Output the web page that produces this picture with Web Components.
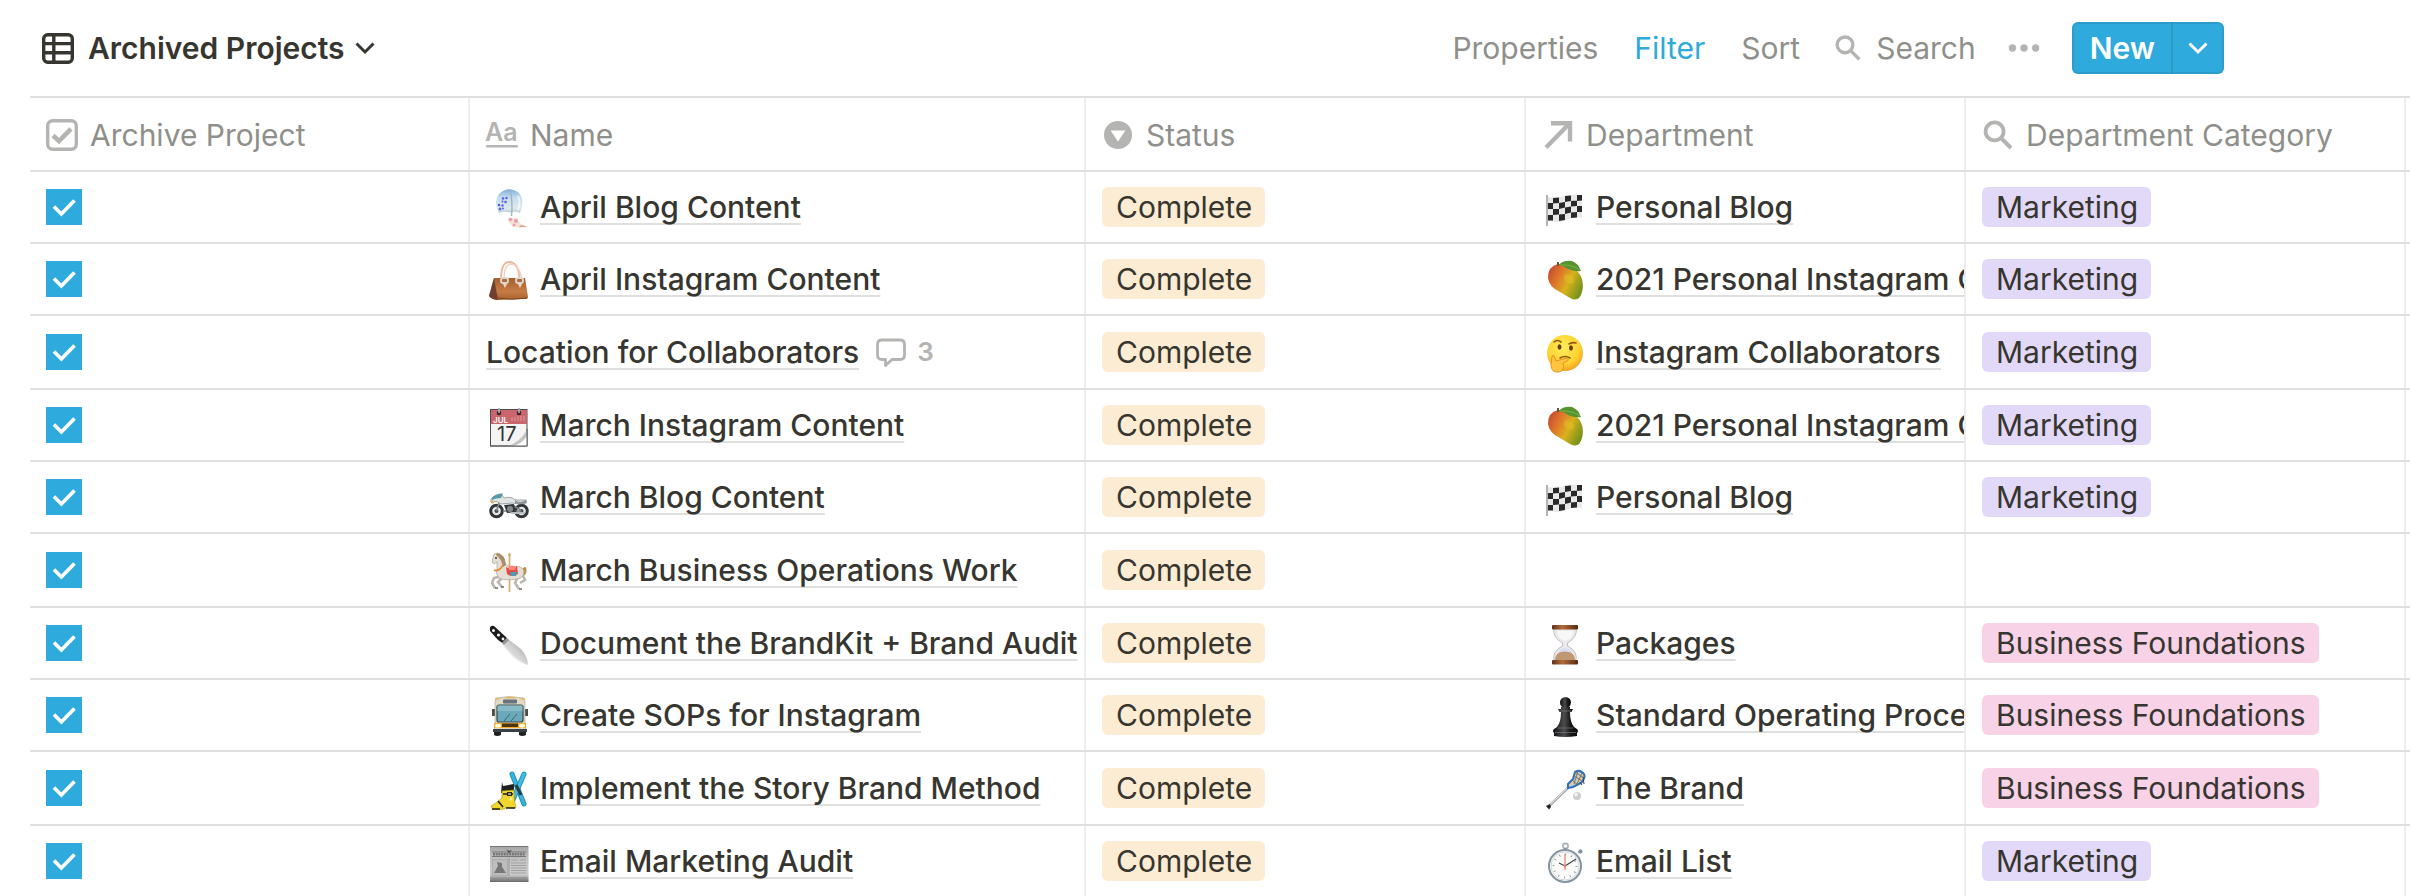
<!DOCTYPE html>
<html lang="en">
<head>
<meta charset="utf-8">
<title>Archived Projects</title>
<style>
  body {
    margin: 0;
    background: #ffffff;
    color: #37352f;
    font-family: Inter, "Liberation Sans", sans-serif;
    font-size: 30px;
    line-height: 40px;
    overflow: hidden;
  }
</style>
</head>
<body>
<project-database></project-database>

<script>
/**
 * Interface icons, drawn in a 32 x 32 box
 */
const ICONS = {
  table: `<g fill="none" stroke="currentColor" stroke-width="3.4">
    <rect x="1.7" y="2.7" width="28.6" height="27.6" rx="4"/>
    <path d="M2 11.6H30M2 20.8H30M11.8 3V30"/></g>`,
  down: `<path d="M7.5 11.5L16 20L24.5 11.5" fill="none" stroke="currentColor" stroke-width="3"/>`,
  checkbox: `<rect x="1.7" y="1.7" width="28.6" height="28.6" rx="5" fill="none" stroke="currentColor" stroke-width="3.4"/>
    <path d="M7 16.5L13 22L25 9.8" fill="none" stroke="currentColor" stroke-width="4.6"/>`,
  title: `<text x="-1" y="22" font-size="25" font-weight="600" fill="currentColor">Aa</text>
    <rect y="26" width="32" height="2.6" rx="1.3" fill="currentColor"/>`,
  select: `<circle cx="16" cy="16" r="14" fill="currentColor"/><path d="M8.6 11.5H23.4L16 22.5Z" fill="#fff"/>`,
  relation: `<path d="M4 28.5L27 5" fill="none" stroke="currentColor" stroke-width="4.4"/>
    <path d="M9 4.2H28V22.5" fill="none" stroke="currentColor" stroke-width="4.4"/>`,
  search: `<circle cx="12.6" cy="12.4" r="9" fill="none" stroke="currentColor" stroke-width="3.8"/>
    <path d="M19 19L29 29" stroke="currentColor" stroke-width="4"/>`,
  dots: `<g fill="currentColor"><circle cx="4.4" cy="16" r="3.7"/><circle cx="16" cy="16" r="3.7"/><circle cx="27.6" cy="16" r="3.7"/></g>`,
  comment: `<path d="M7 4H25Q29.500 4 29.500 8.500V19Q29.500 23.500 25 23.500H17L10.500 29.500V23.500H7Q2.500 23.500 2.500 19V8.500Q2.500 4 7 4Z"
    fill="none" stroke="currentColor" stroke-width="2.8" stroke-linejoin="round"/>`,
  tick: `<path d="M4.500 15.500L13 24L28 8.500" fill="none" stroke="currentColor" stroke-width="4.200"/>`
};

/**
 * Page pictures, drawn in a 40 x 40 box
 */
const PICTURES = {
  chime: `
    <defs><linearGradient id="g" x1="0" y1="0" x2="0" y2="1"><stop offset="0" stop-color="#7db0de"/><stop offset=".35" stop-color="#c3dcee"/><stop offset=".8" stop-color="#dfe9ee"/><stop offset="1" stop-color="#b7cbd8"/></linearGradient></defs>
    <path d="M11 24Q5 13 11 5Q20-4 31 4Q37 12 32 24Q28 22 21.500 23.500Q15 22 11 24Z" fill="url(#g)"/>
    <path d="M22 1Q25 12 23.500 27" fill="none" stroke="#9fb4c2" stroke-width="1.400"/>
    <path d="M30 7Q33 14 30 21" fill="none" stroke="#fff" stroke-width="2" opacity=".6"/>
    <g fill="#5960e6"><circle cx="15" cy="9.500" r="1.300"/><circle cx="18.500" cy="9" r="1.200"/><circle cx="17.500" cy="13" r="1.300"/><circle cx="14.500" cy="12.500" r="1"/>
    <circle cx="11" cy="16" r="1.300"/><circle cx="14.500" cy="16.500" r="1.200"/><circle cx="12" cy="20" r="1.400"/><circle cx="15" cy="19.500" r="1"/></g>
    <path d="M19.500 28Q25 30 29 28.500Q31 36 39.500 37.500Q29 39 25 37.500Q20 34 19.500 28Z" fill="#f1e3d0"/>
    <path d="M33 36L40 37.600L31 38.400Z" fill="#d9a58c"/>
    <g fill="#ee9bb9"><circle cx="22.500" cy="30.500" r="1.800"/><circle cx="28" cy="32" r="2"/><circle cx="26" cy="36" r="1.500"/></g>`,
  handbag: `
    <defs><linearGradient id="g" x1="0" y1="0" x2="0" y2="1"><stop offset="0" stop-color="#a35f30"/><stop offset=".6" stop-color="#c67b45"/><stop offset="1" stop-color="#a9632f"/></linearGradient></defs>
    <path d="M13 19Q13 1 21 1Q31 1 31.500 19" fill="none" stroke="#e9b99d" stroke-width="1.800"/>
    <path d="M16 17Q16 4 23 3Q30 3 34 17" fill="none" stroke="#f2d1bd" stroke-width="1.400"/>
    <path d="M6 17H37L40 36Q40 38 37 38L9 39Q3 38 1 35Z" fill="url(#g)"/>
    <path d="M6 17L10 39Q3 38 1 35Z" fill="#6f4030"/>
    <path d="M9 37Q24 39.500 39 37" fill="none" stroke="#7c4521" stroke-width="1"/>
    <g fill="#b26c3b" stroke="#ddd8d2" stroke-width="1.800"><rect x="13" y="17" width="7" height="5" rx="2"/><rect x="28" y="17" width="7" height="5" rx="2"/></g>
    <path d="M15 23H19L17 27ZM30 23H34L32 27Z" fill="#f4d5bf"/>`,
  calendar: `
    <rect x="2.500" y="2.500" width="36.500" height="36.500" fill="#f4f4f4" stroke="#4d4d50"/>
    <path d="M3 3H39V17H3Z" fill="#c9656b"/>
    <text x="5" y="15.500" font-size="8" font-weight="600" fill="#fff">JUL</text>
    <path d="M24 10V14M27 10V14M30 9V14M33 9V14M36 9V14" stroke="#dd9a9d"/>
    <circle cx="11" cy="6" r="2.300" fill="#35252a"/><circle cx="31" cy="6" r="2.300" fill="#35252a"/>
    <path d="M11 1V6M31 1V6" stroke="#a3aab6" stroke-width="1.800"/>
    <path d="M20 39Q32 35 39 23V39Z" fill="#c4c4c4"/>
    <path d="M25 39H39V29Q34 37 25 39Z" fill="#ffffff"/><path d="M2.500 39H39V22" fill="none" stroke="#5a5a5c"/>
    <text x="9" y="34" font-size="20" fill="#333">17</text>`,
  motorcycle: `
    <g fill="#e6e7e8" stroke="#333638" stroke-width="3"><circle cx="8.500" cy="32" r="5.800"/><circle cx="33.500" cy="32" r="5.800"/></g>
    <g fill="#44484b"><circle cx="8.500" cy="32" r="2"/><circle cx="33.500" cy="32" r="2"/></g>
    <path d="M8.500 32L12 21M15 32H30L33.500 32M24 26L33 31" stroke="#7d8488" stroke-width="1.600"/>
    <path d="M16 26L26 25L28 33L19 34Z" fill="#33373a"/><circle cx="22" cy="30" r="3" fill="#82888b"/><path d="M23 34H37" stroke="#b9bdc0" stroke-width="2"/>
    <path d="M3 20Q7 15 14 16L16 19Q24 17 27 21L37 21Q39 20 38.500 24Q32 26 24 24L13 25Q9 21 3 23Z" fill="#e1e5e4" stroke="#7c8486" stroke-width=".7"/>
    <path d="M4 19Q8 14 15 14.500L13 19Q8 19 4 21Z" fill="#5a9aa2"/><path d="M27 21Q31 25 38 21V24Q32 26 27 24Z" fill="#8c9396"/>
    <circle cx="4.500" cy="23" r="1.500" fill="#d9b253"/>`,
  carousel: `
    <path d="M21.500 1V40" stroke="#d7ae72" stroke-width="1.700"/><circle cx="21.500" cy="3" r="1.300" fill="#d7ae72"/>
    <path d="M34 17Q39 12 38.500 20Q38 23 35 24Q37 20 33 20Z" fill="#b99250"/>
    <path d="M11 25L6 26L4 31L7 36M14 26L10 30L14 35M30 25L27 31L31 37M34 22L37 28L32 31" fill="none" stroke="#bcb7af" stroke-width="2.600"/>
    <path d="M6 2L10 1Q16 3 17 11Q19 15 25 15Q34 13 36 19Q36 26 29 27Q17 29 11 26Q7 22 9 17L9 10L6 12L4 10Z" fill="#e4ded4" stroke="#aaa195" stroke-width=".7"/>
    <path d="M9 1Q17 2 18 13L15 15Q13 6 8 3Z" fill="#ac8d69"/><circle cx="8" cy="6" r="1" fill="#403936"/>
    <path d="M6 18Q11 20 15 13" fill="none" stroke="#df8b35" stroke-width="1.600"/>
    <path d="M18 15Q23 18 29 14L30 22Q24 26 19 22Z" fill="#e64b43"/><path d="M20 15Q24 12 28 15L27 18H21Z" fill="#ff8574"/><path d="M22 20H29L28 24H23Z" fill="#4a9cb6"/>
    <path d="M7 36H10M31 37H34M13 35H16" stroke="#6d675f" stroke-width="1.600"/>`,
  knife: `
    <defs><linearGradient id="g" x1="0" y1="1" x2="1" y2="0"><stop offset="0" stop-color="#f8f8f8"/><stop offset=".5" stop-color="#d4d4d3"/><stop offset="1" stop-color="#8f9291"/></linearGradient></defs>
    <path d="M14.500 19L20 14L33 24Q40 32 40 40Q29 37 14.500 19Z" fill="url(#g)"/><path d="M14.500 20Q28 35 40 40Q28 39 14.500 20Z" fill="#ededed"/>
    <path d="M2 6Q1 0 6 1L19 13L14.500 18L10 15Z" fill="#1c1c1d"/><path d="M19 13L21 15L16 20L14 18Z" fill="#999"/>
    <g fill="#f4f4f4"><circle cx="5.500" cy="5.500" r="1.500"/><circle cx="10.500" cy="10" r="1.600"/><circle cx="15" cy="14" r="1.400"/></g>`,
  bus: `
    <path d="M4 12H8V19H4ZM36 12H40V19H36Z" fill="#4a4d50"/>
    <path d="M6 33H13V38Q9 40 6 38ZM31 33H38V38Q34 40 31 38Z" fill="#1f2122"/>
    <path d="M8 1Q21-2 36 1L37 4V26L38 34H6L7 26V4Z" fill="#dedac5" stroke="#aaa691" stroke-width=".6"/>
    <rect x="15" y="2.500" width="14" height="4" rx="1" fill="#69727d"/><path d="M7 2H11M33 2H37M17 .700H27" stroke="#efb259" stroke-width="1.300"/>
    <rect x="9" y="8" width="26" height="17" rx="2" fill="#6aa9ba" stroke="#384648" stroke-width="1.200"/><path d="M9.500 8.500H34.500V14H9.500Z" fill="#86bac5"/>
    <path d="M16 24L22 17M23 24L29 17" stroke="#305d69" stroke-width=".9"/>
    <path d="M6 26H38V31H6Z" fill="#f4ac27"/><rect x="14" y="26.500" width="16" height="3.500" fill="#4b3415"/>
    <rect x="7" y="27" width="6" height="3.500" rx="1.500" fill="#fffbe8"/><rect x="31" y="27" width="6" height="3.500" rx="1.500" fill="#fffbe8"/><path d="M5 32H39V35H5Z" fill="#3b4044"/>`,
  ski: `
    <path d="M24 4L36 34" stroke="#2093b8" stroke-width="5" stroke-linecap="round"/><path d="M24 4L36 34" stroke="#39b5db" stroke-width="3" stroke-linecap="round"/>
    <path d="M36 4L24 32" stroke="#2093b8" stroke-width="5" stroke-linecap="round"/><path d="M36 4L24 32" stroke="#41bfe3" stroke-width="3" stroke-linecap="round"/><path d="M28 15L33 25" stroke="#273e48" stroke-width="3"/>
    <path d="M14 12L15 16L26 14V23H13Z" fill="#202022"/>
    <path d="M14 21L26 20L26.500 30L28 38H23L20 37L13 40H5L3 36Q10 32 14 28Z" fill="#f0d72e" stroke="#a4921e" stroke-width=".6"/>
    <path d="M15 24H25M10 31L15 37M18 38H27M4 39H12" stroke="#211f17" stroke-width="1.600"/><path d="M19 22H24V26H19Z" fill="#28251b"/><path d="M20 24H23" stroke="#eee" stroke-width="1.200"/><circle cx="23" cy="29" r="1.500" fill="#fff2a0"/>`,
  newspaper: `
    <defs><linearGradient id="g" x1="0" y1="0" x2="0" y2="1"><stop offset="0" stop-color="#a5a5a5"/><stop offset=".4" stop-color="#c4c4c4"/><stop offset=".8" stop-color="#cccccc"/><stop offset="1" stop-color="#656565"/></linearGradient></defs>
    <rect x="2" y="3" width="38.500" height="36" fill="url(#g)"/><path d="M2 3.500H40M4 9H38M4 13.500H38" stroke="#777"/>
    <path d="M5 11.300H37" stroke="#777" stroke-width="2.400" stroke-dasharray="2 .7"/><path d="M18 6L21 10L24 7L21 8Z" fill="#424242"/>
    <rect x="4.500" y="16.500" width="15" height="16" fill="#bdbdbd" stroke="#999" stroke-width=".5"/><path d="M6 30L10 23L9 19L14 20L14 24L18 30Z" fill="#777"/>
    <path d="M23 17H30M32 17H38M23 20H38M23 22.500H38M23 25H38M23 27.500H38M23 30H38" stroke="#a2a2a2" stroke-width="1"/><path d="M21 15V33M3 35H39M3 37H39" stroke="#888" stroke-width=".8"/>`,
  flag: `
    <path d="M3 6V37" stroke="#9a9a9a" stroke-width="1.500"/>
    <path d="M4 8Q12 10 21 7T38 7V29Q30 27 22 31T4 31Z" fill="#e8e8e8"/>
    <path d="M9 9L15 8.500V14L9 14.500ZM21 7L27 6.500V12L21 13ZM33 6H38V11.500L33 12ZM4 14H9V20H4ZM15 14L21 13V18.500L15 20ZM27 12L33 11.500V17L27 17.500ZM9 20L15 20V25.500L9 26ZM21 18.500L27 17.500V23.500L21 25ZM33 17L38 17V23L33 23ZM4 26H9V31.500H4ZM15 25.500L21 25V31L15 32ZM27 23.500L33 23V28.500L27 29Z" fill="#29292b"/>`,
  mango: `
    <defs><linearGradient id="g" x1="0" y1=".2" x2="1" y2=".7"><stop offset="0" stop-color="#c54a31"/><stop offset=".3" stop-color="#df762a"/><stop offset=".6" stop-color="#d8b21c"/><stop offset="1" stop-color="#72911b"/></linearGradient></defs>
    <path d="M14 3Q4 5 4 17Q5 26 16 31L26 37Q35 42 38 31Q41 19 34 11Q26 2 14 3Z" fill="url(#g)"/>
    <path d="M13 1H15V5H13Z" fill="#665441"/><path d="M15 4Q19-1 28 0Q34 2 37 10Q31 11 24 8Q20 5 15 4Z" fill="#57942f"/><path d="M16 4Q27 3 36 9" fill="none" stroke="#82b64d" stroke-width=".8"/>
    <ellipse cx="25" cy="18" rx="6" ry="4" transform="rotate(35 25 18)" fill="#e8c52e" opacity=".4"/>`,
  thinking: `
    <defs><radialGradient id="g" cx=".45" cy=".35" r=".65"><stop offset="0" stop-color="#ffed59"/><stop offset=".7" stop-color="#ffd230"/><stop offset="1" stop-color="#f2a229"/></radialGradient></defs>
    <circle cx="21" cy="19" r="18" fill="url(#g)"/>
    <path d="M10 8Q13 5 17 8M25 10Q29 8 32 9" fill="none" stroke="#8c5612" stroke-width="1.600" stroke-linecap="round"/>
    <ellipse cx="15.500" cy="13" rx="2" ry="2.700" fill="#6b3d0d"/><ellipse cx="27" cy="14" rx="2" ry="2.700" fill="#6b3d0d"/>
    <path d="M16 24Q21 21 26 24" fill="none" stroke="#8c5612" stroke-width="1.500" stroke-linecap="round"/>
    <path d="M8 22Q10 20 11 24L12 27L21 24.500Q25 24 24 26.500L19 29Q21 37 15 38Q7 39 7 31Z" fill="#ffc53c" stroke="#df8e22" stroke-width=".9"/>`,
  hourglass: `
    <defs><linearGradient id="g"><stop offset="0" stop-color="#613017"/><stop offset=".4" stop-color="#b06d3a"/><stop offset="1" stop-color="#592811"/></linearGradient></defs>
    <path d="M10 3H32Q34 12 23.500 18V21Q34 26 32 36H10Q8 26 18.500 21V18Q8 12 10 3Z" fill="#eceaec" stroke="#c1bdc3" stroke-width="1"/>
    <path d="M13 6H29Q29 13 21 16Q13 13 13 6Z" fill="#f9f8f9"/><path d="M11 35Q11 28 20 25H22Q31 28 31 35Z" fill="#bf9973"/><path d="M13 28Q17 23 21 23Q25 23 29 28Q21 25 13 28Z" fill="#d9dfee"/>
    <rect x="8" y="0" width="26" height="4.500" rx="1" fill="url(#g)"/><rect x="8" y="35" width="26" height="4.500" rx="1" fill="url(#g)"/>`,
  pawn: `
    <defs><linearGradient id="g"><stop offset="0" stop-color="#101011"/><stop offset=".45" stop-color="#4c4c4e"/><stop offset=".7" stop-color="#171718"/><stop offset="1" stop-color="#0c0c0c"/></linearGradient></defs>
    <circle cx="21.500" cy="5.500" r="5.500" fill="url(#g)"/><path d="M17 10H26V12H29L27.500 15H26Q26 25 30 30L33 32Q35 34 33 36V39Q21 41 10 39V36Q8 34 10 32L13 30Q17 25 17 15H15.500L14 12H17Z" fill="url(#g)"/>
    <path d="M11 35.500H32M14 31H29M16 14H27" stroke="#77777a" stroke-width=".7"/>`,
  lacrosse: `
    <path d="M5 36L25 17" stroke="#aaa9ab" stroke-width="2.600"/><path d="M5 35.500L25 16.500" stroke="#ededed" stroke-width="1"/><path d="M2 36L6 34L7 37L5 39.500Z" fill="#242426"/>
    <path d="M24 18L24 14L29 9L31 2Q36-1 40 4Q42 8 37 13L29 17Z" fill="#d1cbb9" stroke="#2f70bd" stroke-width="2"/>
    <path d="M30 6L38 11M31 2L40 8M28 10L34 15M34 1L30 14M38 3L33 14" stroke="#706b61" stroke-width=".9"/><path d="M39 7L40 14M36 12L38 15" stroke="#39424b" stroke-width="1"/>
    <circle cx="33" cy="26" r="4" fill="#cdcdce"/><circle cx="32" cy="24.500" r="2" fill="#f0f0f0"/>`,
  stopwatch: `
    <circle cx="21.500" cy="3" r="2.600" fill="none" stroke="#a7afb6" stroke-width="1.600"/><path d="M21.500 5V8M35 10L37 7" stroke="#8a959f" stroke-width="3"/><circle cx="36.500" cy="8.500" r="2" fill="#7993a8"/>
    <circle cx="21" cy="23" r="16" fill="#fbfbfa" stroke="#8494a1" stroke-width="2"/><circle cx="21" cy="23" r="14" fill="none" stroke="#d2d8dc" stroke-width="1"/>
    <circle cx="21" cy="23" r="11.500" fill="none" stroke="#858585" stroke-width="2" stroke-dasharray=".8 5.220"/>
    <path d="M21 27V11" stroke="#e48267" stroke-width="1.200"/><path d="M21 23L32 16M21 23L15 20" fill="none" stroke="#3c474f" stroke-width="1.100"/><circle cx="21" cy="23" r="1.300" fill="#e48267"/>`
};

const PROJECTS = [
  { icon: 'chime', name: 'April Blog Content', department: ['flag', 'Personal Blog'], category: 'Marketing' },
  { icon: 'handbag', name: 'April Instagram Content', department: ['mango', '2021 Personal Instagram Content'], category: 'Marketing' },
  { name: 'Location for Collaborators', comments: 3, department: ['thinking', 'Instagram Collaborators'], category: 'Marketing' },
  { icon: 'calendar', name: 'March Instagram Content', department: ['mango', '2021 Personal Instagram Content'], category: 'Marketing' },
  { icon: 'motorcycle', name: 'March Blog Content', department: ['flag', 'Personal Blog'], category: 'Marketing' },
  { icon: 'carousel', name: 'March Business Operations Work' },
  { icon: 'knife', name: 'Document the BrandKit + Brand Audit', department: ['hourglass', 'Packages'], category: 'Business Foundations' },
  { icon: 'bus', name: 'Create SOPs for Instagram', department: ['pawn', 'Standard Operating Procedures'], category: 'Business Foundations' },
  { icon: 'ski', name: 'Implement the Story Brand Method', department: ['lacrosse', 'The Brand'], category: 'Business Foundations' },
  { icon: 'newspaper', name: 'Email Marketing Audit', department: ['stopwatch', 'Email List'], category: 'Marketing' }
];

class UiIcon extends HTMLElement {

  constructor() {
    super();
    this.attachShadow({ mode: 'open' });
  }

  connectedCallback() {
    this.shadowRoot.innerHTML = `
      <style>
        :host {
          display: block;
          flex: none;
          width: 32px;
          height: 32px;
        }

        svg {
          display: block;
          width: 100%;
          height: 100%;
          overflow: visible;
        }
      </style>
      <svg viewBox='0 0 32 32' aria-hidden='true'>${ICONS[this.getAttribute('name')]}</svg>
    `;
  }

}

customElements.define('ui-icon', UiIcon);

class PageLink extends HTMLElement {

  constructor() {
    super();
    this.attachShadow({ mode: 'open' });
  }

  connectedCallback() {
    const picture = PICTURES[this.getAttribute('icon')];
    this.shadowRoot.innerHTML = `
      <style>
        :host {
          display: flex;
          align-items: center;
          gap: 12px;
          white-space: nowrap;
        }

        svg {
          flex: none;
          width: 40px;
          height: 40px;
          margin: 4px 0 0 2px;
          overflow: visible;
        }

        a {
          color: inherit;
          font-weight: 500;
          text-decoration: underline 2px #dfdfde;
          text-underline-offset: 5px;
          text-decoration-skip-ink: none;
        }
      </style>
      ${picture ? `<svg viewBox='0 0 40 40' aria-hidden='true'>${picture}</svg>` : ''}
      <a href='#'><slot></slot></a>
    `;
  }

}

customElements.define('page-link', PageLink);

class SelectTag extends HTMLElement {

  constructor() {
    super();
    this.attachShadow({ mode: 'open' });
    this.shadowRoot.innerHTML = `
      <style>
        :host {
          display: inline-block;
          padding: 0 13px 0 14px;
          border-radius: 6px;
          background: #fbecd3;
          white-space: nowrap;
        }

        :host([color='purple']) {
          background: #e2d9f8;
        }

        :host([color='pink']) {
          background: #f8d2e7;
        }
      </style>
      <slot></slot>
    `;
  }

}

customElements.define('select-tag', SelectTag);

class TickBox extends HTMLElement {

  constructor() {
    super();
    this.attachShadow({ mode: 'open' });
  }

  connectedCallback() {
    this.shadowRoot.innerHTML = `
      <style>
        :host {
          display: block;
        }

        label {
          display: grid;
          place-items: center;
          width: 36px;
          height: 36px;
        }

        input,
        ui-icon {
          grid-area: 1 / 1;
        }

        input {
          appearance: none;
          width: 36px;
          height: 36px;
          margin: 0;
          border: 3px solid #37352f;
        }

        input:checked {
          border: 0;
          background: #2eaadc;
        }

        ui-icon {
          width: 28px;
          height: 28px;
          color: #ffffff;
          pointer-events: none;
        }
      </style>
      <label>
        <input type='checkbox' checked aria-label='Archive ${this.getAttribute('label')}'>
        <ui-icon name='tick'></ui-icon>
      </label>
    `;
  }

}

customElements.define('tick-box', TickBox);

class CommentCount extends HTMLElement {

  constructor() {
    super();
    this.attachShadow({ mode: 'open' });
    this.shadowRoot.innerHTML = `
      <style>
        :host {
          display: flex;
          align-items: center;
          gap: 10px;
          color: #b4b4b2;
          font-size: 26px;
          font-weight: 600;
        }
      </style>
      <ui-icon name='comment'></ui-icon>
      <slot></slot>
    `;
  }

}

customElements.define('comment-count', CommentCount);

class ViewToolbar extends HTMLElement {

  constructor() {
    super();
    this.attachShadow({ mode: 'open' });
    this.shadowRoot.innerHTML = `
      <style>
        :host {
          display: flex;
          align-items: center;
          justify-content: space-between;
          height: 96px;
          padding: 0 186px 0 42px;
        }

        button {
          display: flex;
          align-items: center;
          padding: 0;
          border: 0;
          background: none;
          color: inherit;
          font: inherit;
          cursor: pointer;
        }

        nav {
          display: flex;
          align-items: center;
          gap: 32px;
          color: #8f8f8b;
        }

        nav ui-icon {
          color: #b4b4b2;
        }

        .title {
          gap: 14px;
          font-weight: 600;
        }

        .title ui-icon:last-child {
          margin-left: -10px;
        }

        .text {
          padding: 0 2px;
        }

        .active {
          color: #2eaadc;
        }

        .search {
          gap: 14px;
        }

        .search ui-icon {
          width: 28px;
          height: 28px;
        }

        .new {
          display: flex;
          height: 52px;
          border-radius: 6px;
          background: #2eaadc;
          box-shadow: inset 0 0 0 2px rgba(15, 15, 15, 0.08);
          color: #ffffff;
          font-weight: 600;
        }

        .new button:first-child {
          padding: 0 16px 0 18px;
          border-right: 2px solid rgba(15, 15, 15, 0.1);
        }

        .new button:last-child {
          padding: 0 10px 0 9px;
        }

        .new ui-icon {
          color: #ffffff;
        }
      </style>
      <button class='title'>
        <ui-icon name='table'></ui-icon>
        Archived Projects
        <ui-icon name='down'></ui-icon>
      </button>
      <nav>
        <button class='text'>Properties</button>
        <button class='text active'>Filter</button>
        <button class='text'>Sort</button>
        <button class='search'><ui-icon name='search'></ui-icon>Search</button>
        <button aria-label='More'><ui-icon name='dots'></ui-icon></button>
        <div class='new'>
          <button>New</button>
          <button aria-label='Templates'><ui-icon name='down'></ui-icon></button>
        </div>
      </nav>
    `;
  }

}

customElements.define('view-toolbar', ViewToolbar);

class ColumnTitle extends HTMLElement {

  constructor() {
    super();
    this.attachShadow({ mode: 'open' });
  }

  connectedCallback() {
    this.shadowRoot.innerHTML = `
      <style>
        :host {
          display: flex;
          align-items: center;
          gap: 12px;
          color: #8f8f8b;
          font-weight: 400;
          white-space: nowrap;
        }

        ui-icon {
          color: #b4b4b2;
        }
      </style>
      <ui-icon name='${this.getAttribute('icon')}'></ui-icon>
      <slot></slot>
    `;
  }

}

customElements.define('column-title', ColumnTitle);

class ProjectTable extends HTMLElement {

  constructor() {
    super();
    this.attachShadow({ mode: 'open' });
  }

  connectedCallback() {
    this.shadowRoot.innerHTML = `
      <style>
        :host {
          display: block;
          margin-left: 30px;
          border-top: 2px solid #dfdfde;
        }

        table {
          width: 100%;
          border-spacing: 0;
          table-layout: fixed;
        }

        col {
          width: 440px;
        }

        col.name {
          width: 616px;
        }

        col.rest {
          width: auto;
        }

        th,
        td {
          box-sizing: border-box;
          height: 72px;
          padding: 0 0 0 16px;
          border-bottom: 2px solid #dfdfde;
          text-align: left;
          overflow: hidden;
          background: linear-gradient(#ededec, #ededec) right / 2px 100% no-repeat;
        }

        th {
          height: 74px;
          padding-top: 1px;
        }

        th:last-child,
        td:last-child {
          padding: 0;
          background: none;
        }

        /* every third row takes up the rounding of the row height */
        tbody tr:nth-child(3n) td {
          height: 74px;
        }

        .cell {
          display: flex;
          align-items: center;
          gap: 16px;
          margin-right: 2px;
          overflow: hidden;
        }
      </style>
      <table>
        <colgroup>
          <col><col class='name'><col><col><col><col class='rest'>
        </colgroup>
        <thead>
          <tr>
            <th><column-title icon='checkbox'>Archive Project</column-title></th>
            <th><column-title icon='title'>Name</column-title></th>
            <th><column-title icon='select'>Status</column-title></th>
            <th><column-title icon='relation'>Department</column-title></th>
            <th><column-title icon='search'>Department Category</column-title></th>
            <th></th>
          </tr>
        </thead>
        <tbody>${PROJECTS.map(project => this._row(project)).join('')}</tbody>
      </table>
    `;
  }

  _row({ icon, name, comments, department, category }) {
    const color = category === 'Marketing' ? 'purple' : 'pink';
    return `
      <tr>
        <td><tick-box label='${name}'></tick-box></td>
        <td>
          <div class='cell'>
            <page-link icon='${icon || ''}'>${name}</page-link>
            ${comments ? `<comment-count>${comments}</comment-count>` : ''}
          </div>
        </td>
        <td><div class='cell'><select-tag>Complete</select-tag></div></td>
        <td><div class='cell'>${department ? `<page-link icon='${department[0]}'>${department[1]}</page-link>` : ''}</div></td>
        <td><div class='cell'>${category ? `<select-tag color='${color}'>${category}</select-tag>` : ''}</div></td>
        <td></td>
      </tr>
    `;
  }

}

customElements.define('project-table', ProjectTable);

class ProjectDatabase extends HTMLElement {

  constructor() {
    super();
    this.attachShadow({ mode: 'open' });
    this.shadowRoot.innerHTML = `
      <style>
        :host {
          display: block;
        }
      </style>
      <view-toolbar></view-toolbar>
      <project-table></project-table>
    `;
  }

}

customElements.define('project-database', ProjectDatabase);
</script>
</body>
</html>
